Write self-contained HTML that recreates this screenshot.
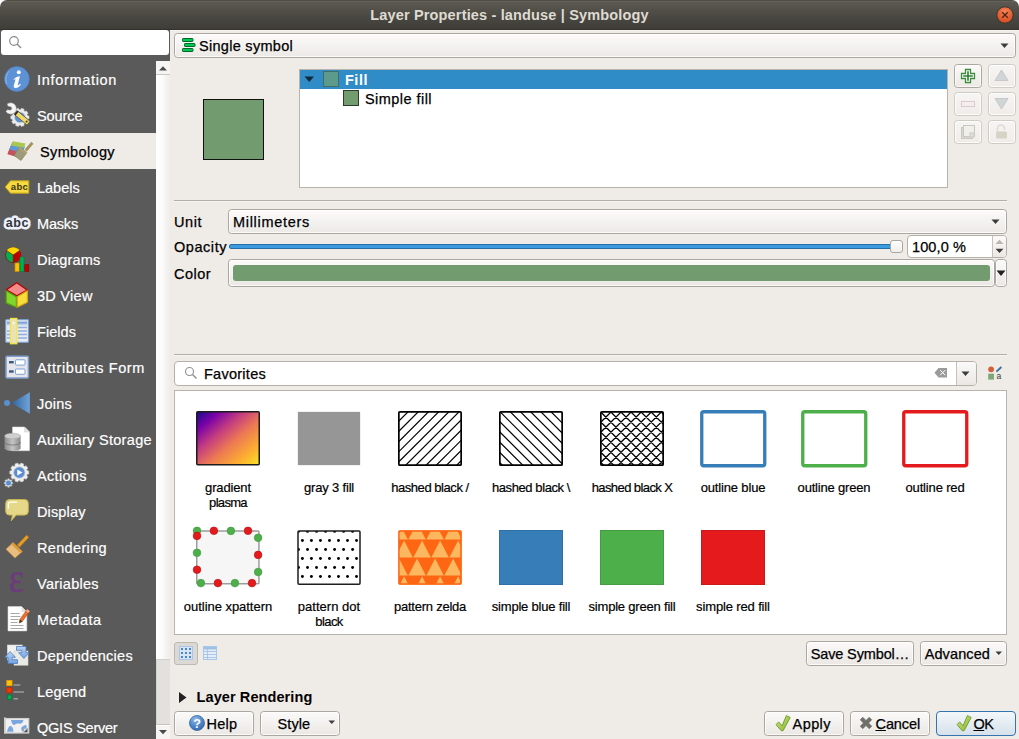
<!DOCTYPE html>
<html><head><meta charset="utf-8">
<style>
*{box-sizing:border-box;margin:0;padding:0}
html,body{width:1019px;height:739px;overflow:hidden;background:#efebe7;font-family:"Liberation Sans",sans-serif;font-size:15px;color:#1a1a1a}
.abs{position:absolute}
#title{left:0;top:0;width:1019px;height:30px;background:linear-gradient(#4f4d46 0,#4f4d46 1px,#65625a 1px,#65625a 2px,#5b5951 2px,#4a4842 55%,#3e3d38 29px,#33322e 29px,#33322e 30px);border-radius:7px 7px 0 0}
#title .t{left:0;width:1019px;top:7px;text-align:center;color:#dfdbd2;font-weight:bold;font-size:14.5px;line-height:17px;white-space:nowrap}
#side{left:0;top:55px;width:156px;height:684px;background:#5a5a5a}
#sidetop{left:0;top:30px;width:170px;height:31px;background:#5a5a5a}
#search{left:1px;top:30px;width:168px;height:25px;background:#fff;border-radius:3px}
.it{-webkit-text-stroke:.2px #fff;left:0;width:156px;height:36px;color:#fff;font-size:14.5px;line-height:36px;padding-left:37px;padding-top:1px}
.it.sel{background:#efebe7;color:#000;-webkit-text-stroke:.25px #000;padding-left:40px}
#sb{left:156px;top:61px;width:14px;height:678px;background:#fff}
.btn{border:1px solid #aba7a0;border-radius:3.5px;background:linear-gradient(#fbfaf9,#ebe8e4);box-shadow:inset 0 0 0 1px rgba(255,255,255,.75)}
.combo{border:1px solid #aba7a0;border-radius:3.5px;background:linear-gradient(#fcfbfa,#ece9e6);box-shadow:inset 0 0 0 1px rgba(255,255,255,.75)}
.lbl{font-size:14.5px;white-space:nowrap;margin-top:1px;color:#000;-webkit-text-stroke:.25px #000}
.btn.dis{border-color:#cfcbc5;background:linear-gradient(#f7f5f3,#efece8)}
.sym{width:64px;height:55px}
.sl{color:#000;-webkit-text-stroke:.2px #000;font-size:13px;text-align:center;width:120px;line-height:15px;white-space:nowrap}
</style></head><body>
<div class="abs" style="left:0;top:0;width:1019px;height:8px;background:#fff"></div>
<div id="title" class="abs"><div class="t abs"><span style="letter-spacing: 0.16px;">Layer Properties - landuse | Symbology</span></div>
<svg class="abs" style="left:996px;top:5.600px" width="18" height="18"><defs><radialGradient id="cg" cx=".5" cy=".3" r=".7"><stop offset="0" stop-color="#f58458"></stop><stop offset="1" stop-color="#d8491c"></stop></radialGradient></defs><circle cx="9" cy="9" r="8.2" fill="url(#cg)" stroke="#3a3832" stroke-width="1"></circle><path d="M6.200 6.200l5.600 5.600M11.800 6.200l-5.600 5.600" stroke="#4a2418" stroke-width="1.300"></path></svg></div>
<div class="abs" style="left:170px;top:30px;width:849px;height:1px;background:#f6f4f1"></div>
<div id="sidetop" class="abs"></div>
<div id="side" class="abs"></div>
<div id="search" class="abs"><svg class="abs" style="left:7px;top:5px" width="16" height="16"><circle cx="6" cy="6" r="4.3" fill="none" stroke="#8a8a8a" stroke-width="1.2"></circle><path d="M9 9l4 4" stroke="#8a8a8a" stroke-width="1.5"></path></svg></div>
<div id="sb" class="abs"></div>
<div class="abs" style="left:156px;top:61px;width:14px;height:14px;background:#f6f5f3;border-bottom:1px solid #cbc7c1"></div>
<svg class="abs" style="left:159px;top:66px" width="9" height="5"><path d="M0 4.500h8l-4-4.200z" fill="#4a4a4a"></path></svg>
<div class="abs" style="left:156px;top:75px;width:14px;height:585px;background:linear-gradient(to right,#fff,#fdfcfc 40%,#efedea);border-bottom:1px solid #d3d0cb"></div>
<div class="abs" style="left:156px;top:660px;width:14px;height:65px;background:#e3e1de;border-left:1px solid #d6d3cf;border-bottom:1px solid #c5c1bb"></div>
<div class="abs" style="left:156px;top:726px;width:14px;height:13px;background:#f6f5f3"></div>
<svg class="abs" style="left:159px;top:730px" width="9" height="5"><path d="M0 0h8l-4 4.200z" fill="#4a4a4a"></path></svg>
<div id="items">
<div class="it abs" style="top:61px"><span style="letter-spacing: 0.68px;">Information</span></div>
<div class="it abs" style="top:97px"><span style="letter-spacing: -0.09px;">Source</span></div>
<div class="it abs sel" style="top:133px"><span style="letter-spacing: 0.36px;">Symbology</span></div>
<div class="it abs" style="top:169px"><span style="letter-spacing: -0.01px;">Labels</span></div>
<div class="it abs" style="top:205px"><span style="letter-spacing: -0.18px;">Masks</span></div>
<div class="it abs" style="top:241px"><span style="letter-spacing: 0.16px;">Diagrams</span></div>
<div class="it abs" style="top:277px"><span style="letter-spacing: 0.27px;">3D View</span></div>
<div class="it abs" style="top:313px"><span style="letter-spacing: 0.05px;">Fields</span></div>
<div class="it abs" style="top:349px"><span style="letter-spacing: 0.59px;">Attributes Form</span></div>
<div class="it abs" style="top:385px"><span style="letter-spacing: 0.21px;">Joins</span></div>
<div class="it abs" style="top:421px"><span style="letter-spacing: 0.31px;">Auxiliary Storage</span></div>
<div class="it abs" style="top:457px"><span style="letter-spacing: 0.31px;">Actions</span></div>
<div class="it abs" style="top:493px"><span style="letter-spacing: 0.14px;">Display</span></div>
<div class="it abs" style="top:529px"><span style="letter-spacing: 0.34px;">Rendering</span></div>
<div class="it abs" style="top:565px"><span style="letter-spacing: 0.28px;">Variables</span></div>
<div class="it abs" style="top:601px"><span style="letter-spacing: 0.53px;">Metadata</span></div>
<div class="it abs" style="top:637px"><span style="letter-spacing: 0.27px;">Dependencies</span></div>
<div class="it abs" style="top:673px"><span style="letter-spacing: 0.15px;">Legend</span></div>
<div class="it abs" style="top:709px"><span style="letter-spacing: -0.23px;">QGIS Server</span></div>
</div>



<!-- ICONS --><svg class="abs" style="left:0;top:0;pointer-events:none" width="40" height="739"><defs><radialGradient id="ig" cx=".4" cy=".2" r=".9"><stop offset="0" stop-color="#8db6e8"></stop><stop offset=".55" stop-color="#5a90d2"></stop><stop offset="1" stop-color="#3e72b8"></stop></radialGradient><linearGradient id="jg" x1="0" x2="1"><stop offset="0" stop-color="#2f639c"></stop><stop offset="1" stop-color="#6fa3da"></stop></linearGradient><linearGradient id="dbg" x1="0" x2="1"><stop offset="0" stop-color="#8e8e8e"></stop><stop offset=".5" stop-color="#c4c4c4"></stop><stop offset="1" stop-color="#8a8a8a"></stop></linearGradient><linearGradient id="bag" x1="0" y1="0" x2="0" y2="1"><stop offset="0" stop-color="#b9d2f4"></stop><stop offset="1" stop-color="#74a2e2"></stop></linearGradient></defs><circle cx="16.9" cy="79" r="12.4" fill="#5d93d6" stroke="#4f84c8" stroke-width=".6"></circle><path d="M6 84a11.3 11.3 0 0 1 5-14.500a12.5 12.5 0 0 0-3.6 14.500z" fill="#fff" opacity=".25"></path><circle cx="18.8" cy="72.2" r="2" fill="#fff"></circle><path d="M13.2 80.300C14 78.3 16 76.6 19.9 76.200L17.7 85C17.6 85.6 18 85.6 18.6 85.100L20.2 83.800L20.8 84.700C19.5 86.5 17.7 87.9 15.6 87.900C13.9 87.9 13.4 86.9 13.8 85.400L15.6 79.300C15 79.4 14.2 79.8 13.2 80.300Z" fill="#fff"></path><path d="M28.99 115.98L28.99 118.82L27.50 119.14L27.07 120.46L28.09 121.59L26.42 123.90L25.03 123.28L23.90 124.10L24.06 125.60L21.35 126.48L20.60 125.17L19.20 125.17L18.45 126.48L15.74 125.60L15.90 124.10L14.77 123.28L13.38 123.90L11.71 121.59L12.73 120.46L12.30 119.14L10.81 118.82L10.81 115.98L12.30 115.66L12.73 114.34L11.71 113.21L13.38 110.90L14.77 111.52L15.90 110.70L15.74 109.20L18.45 108.32L19.20 109.63L20.60 109.63L21.35 108.32L24.06 109.20L23.90 110.70L25.03 111.52L26.42 110.90L28.09 113.21L27.07 114.34L27.50 115.66z" fill="#ececec" stroke="#cfcfcf" stroke-width="0.6" stroke-linejoin="round"></path><circle cx="19.9" cy="117.4" r="5.4" fill="#5b8fd4" stroke="#d8d8d8" stroke-width=".8"></circle><g transform="translate(10.8 108.5) rotate(39.5)"><rect x="2" y="-2.1" width="5.5" height="4.2" fill="#d9d9d9" stroke="#7a7a7a" stroke-width=".5"></rect><g transform="rotate(-30)"><path d="M-4.4 -3.700A5.7 5.7 0 1 1 -4.4 3.700L-3.2 1.700L-0.8 1.700A1.7 1.7 0 0 0 -0.8 -1.700L-3.2 -1.700Z" fill="#f4f4f4" stroke="#8a8a8a" stroke-width=".5" stroke-linejoin="round"></path></g><rect x="6.3" y="-2.4" width="16.8" height="4.8" rx="1" fill="#f1da6c" stroke="#57523a" stroke-width=".8"></rect><rect x="6.3" y="-2.4" width="1.8" height="4.8" fill="#2e2c24"></rect><circle cx="20.5" cy="0" r="1" fill="#3c3a2c"></circle></g><path d="M7.5 154l5-12 12 4-4 12z" fill="#c94a5a"></path><path d="M7.5 154l3.3-8 13.4 3.5-3.7 8.500z" fill="#c8505c"></path><path d="M9.3 149.500l2.4-5.7 13.3 3-2.7 6z" fill="#5a9bd8"></path><path d="M11 145.500l2-4.3 12.5 2.3-1.8 4.300z" fill="#a9c850"></path><path d="M25 149.500l6.3-7.3 1.8 1.5-6.2 7.400z" fill="#a8925a" stroke="#8c7846" stroke-width=".5"></path><path d="M19.5 147l7.5 5.5-6 8-7-5z" fill="#9c9a78" stroke="#7e7c5c" stroke-width=".6"></path><path d="M19.5 147l7.5 5.5-1.2 1.6-7.5-5.500z" fill="#b3a46c"></path><path d="M10.5 180.800h18.300v12.400h-18.300l-5.3-6.200z" fill="#f6da3e" stroke="#c2a21c" stroke-width="1" stroke-linejoin="round"></path><text x="19.5" y="190.3" text-anchor="middle" font-family="Liberation Sans" font-weight="bold" font-size="9.5" fill="#3a3420" letter-spacing=".3">abc</text><text x="17.3" y="227.3" text-anchor="middle" font-family="Liberation Sans" font-weight="bold" font-size="12.5" fill="#eef0fa" stroke="#eef0fa" stroke-width="5" stroke-linejoin="round" letter-spacing=".6">abc</text><text x="17.3" y="227.3" text-anchor="middle" font-family="Liberation Sans" font-weight="bold" font-size="12.5" fill="#33363c" letter-spacing=".6">abc</text><circle cx="13.2" cy="255" r="7.7" fill="#00b050" stroke="#7a1a10" stroke-width=".8"></circle><path d="M13.2 255l-6.4-4.300a7.7 7.7 0 0 1 12.8 0z" fill="#ffd700"></path><path d="M13.2 255l6.4-4.300a7.7 7.7 0 0 1-6.4 12z" fill="#c00000"></path><path d="M13.2 255v7.700M13.2 255l-6.4-4.300M13.2 255l6.4-4.3" stroke="#7a1a10" stroke-width=".7"></path><rect x="15" y="263" width="4.2" height="8.5" fill="#ffc000" stroke="#c98a00" stroke-width=".6"></rect><rect x="20" y="257" width="4" height="14.5" fill="#00b050" stroke="#007a36" stroke-width=".6"></rect><rect x="24.8" y="264.7" width="4" height="6.8" fill="#c00000" stroke="#8a0000" stroke-width=".6"></rect><path d="M16.8 282.800l10.4 7.1-10.4 5.9-10.4-6.100z" fill="#f48a8a" stroke="#b40000" stroke-width="1.2" stroke-linejoin="round"></path><path d="M6.2 290.800l10.2 6v10.400l-10.2-4.300z" fill="#80d62a" stroke="#55a010" stroke-width="1.2" stroke-linejoin="round"></path><path d="M27.4 290.800l-10.2 6v10.400l10.2-5z" fill="#f8dc3c" stroke="#d0a818" stroke-width="1.2" stroke-linejoin="round"></path><rect x="5.7" y="319.5" width="22.8" height="22.8" rx="1" fill="#e9ebf2" stroke="#7d9dce" stroke-width="1.2"></rect><rect x="6.5" y="320.3" width="21.2" height="5" fill="#bcd0ec"></rect><path d="M7 322.800h20" stroke="#7fa3d8" stroke-width="1.6"></path><path d="M18 327.500h9M18 331h9M18 334.500h9M18 338h9" stroke="#8fb0de" stroke-width="1.3"></path><path d="M7 331h3M7 334.500h3M7 338h3" stroke="#8fb0de" stroke-width="1.3"></path><rect x="10.5" y="318.5" width="6.3" height="25.2" fill="#eae3b6" stroke="#f4e640" stroke-width="1.3"></rect><circle cx="13.5" cy="323" r="1" fill="#fff"></circle><rect x="6" y="356.3" width="22.4" height="21.8" rx="1" fill="#e6e6ea" stroke="#7d9dce" stroke-width="1.5"></rect><rect x="15.5" y="359.8" width="9.5" height="5.3" rx=".8" fill="#fff" stroke="#7aa0d8" stroke-width="1"></rect><rect x="15.5" y="369" width="9.5" height="5.3" rx=".8" fill="#fff" stroke="#7aa0d8" stroke-width="1"></rect><rect x="9" y="361" width="4.7" height="2.4" fill="#3d5878"></rect><rect x="9" y="370.3" width="4.7" height="2.4" fill="#3d5878"></rect><circle cx="7" cy="403" r="3" fill="#5a8ed0"></circle><path d="M11.6 403l18.2-10.800v21.600z" fill="url(#jg)"></path><path d="M12.5 427h12l5 5v18.700h-17z" fill="#fff" stroke="#d8d8d8" stroke-width=".6"></path><path d="M24.5 427v5h5z" fill="#e4e4e4" stroke="#cfcfcf" stroke-width=".5"></path><path d="M4.6 436v12.300a8 2.8 0 0 0 16 0v-12.300z" fill="url(#dbg)"></path><ellipse cx="12.6" cy="436" rx="8" ry="2.8" fill="#cfcfcf" stroke="#a2a2a2" stroke-width=".5"></ellipse><path d="M4.6 442.200a8 2.8 0 0 0 16 0" fill="none" stroke="#6e6e6e" stroke-width=".8"></path><path d="M28.78 471.01L28.78 473.99L27.20 474.30L26.75 475.68L27.85 476.87L26.10 479.28L24.63 478.60L23.46 479.45L23.64 481.06L20.82 481.98L20.02 480.57L18.58 480.57L17.78 481.98L14.96 481.06L15.14 479.45L13.97 478.60L12.50 479.28L10.75 476.87L11.85 475.68L11.40 474.30L9.82 473.99L9.82 471.01L11.40 470.70L11.85 469.32L10.75 468.13L12.50 465.72L13.97 466.40L15.14 465.55L14.96 463.94L17.78 463.02L18.58 464.43L20.02 464.43L20.82 463.02L23.64 463.94L23.46 465.55L24.63 466.40L26.10 465.72L27.85 468.13L26.75 469.32L27.20 470.70z" fill="#efefef" stroke="#cdcdcd" stroke-width="0.6" stroke-linejoin="round"></path><circle cx="19.3" cy="472.5" r="5.7" fill="#5b8fd4" stroke="#d0d0d0" stroke-width=".8"></circle><path d="M17.3 469.500l5.2 3-5.2 3z" fill="#fff"></path><path d="M12.73 482.24L12.73 483.76L11.60 483.81L11.26 484.62L12.03 485.46L10.96 486.53L10.12 485.76L9.31 486.10L9.26 487.23L7.74 487.23L7.69 486.10L6.88 485.76L6.04 486.53L4.97 485.46L5.74 484.62L5.40 483.81L4.27 483.76L4.27 482.24L5.40 482.19L5.74 481.38L4.97 480.54L6.04 479.47L6.88 480.24L7.69 479.90L7.74 478.77L9.26 478.77L9.31 479.90L10.12 480.24L10.96 479.47L12.03 480.54L11.26 481.38L11.60 482.19z" fill="#e8e8e8" stroke="#bdbdbd" stroke-width="0.5" stroke-linejoin="round"></path><circle cx="8.5" cy="483" r="2.5" fill="#5b8fd4"></circle><path d="M9.5 499.500h15a3.8 3.8 0 0 1 3.8 3.800v8a3.8 3.8 0 0 1-3.8 3.800h-8.300l-5 5.7 1.3-5.700h-3a3.8 3.8 0 0 1-3.8-3.800v-8a3.8 3.8 0 0 1 3.8-3.800z" fill="#e5d989" stroke="#c5b350" stroke-width="1" stroke-linejoin="round"></path><path d="M8.3 508v-3.500a2.3 2.3 0 0 1 2.3-2.300h6" fill="none" stroke="#fff" stroke-width="1.3" stroke-linecap="round"></path><path d="M26.6 535.300l2.1 2-9.2 9.8-2.1-2z" fill="#e79f24" stroke="#c98414" stroke-width=".8" stroke-linejoin="round"></path><path d="M13 542.600l9.3 8.9-7.4 6.5-8.9-8.700z" fill="#e9bd80" stroke="#cf9440" stroke-width=".7" stroke-linejoin="round"></path><path d="M13 542.600l9.3 8.9-1.8 1.6-9.3-8.900z" fill="#dd9a38"></path><text x="16.3" y="591.8" text-anchor="middle" font-family="Liberation Serif" font-size="41" fill="#6d3b7c" stroke="#6d3b7c" stroke-width=".7" transform="translate(16.3 0) scale(.86 1) translate(-16.3 0)">ε</text><path d="M8 606.600h13.500l5.3 5.300v19h-18.800z" fill="#fff" stroke="#d9d9d9" stroke-width=".6"></path><path d="M21.5 606.600v5.300h5.300z" fill="#e2e2e2"></path><path d="M10.5 613.500h9M10.5 616.500h10M10.5 619.500h8M10.5 622.500h7M10.5 625.500h13M10.5 628.500h13" stroke="#a8a8a8" stroke-width="1"></path><path d="M27.2 609.200l2.5 2-7.4 10.3-3 1.6.5-3.500z" fill="#e8702a" stroke="#b85216" stroke-width=".6" stroke-linejoin="round"></path><path d="M19.3 623.100l.5-3.5 2.5 1.900z" fill="#3a3a3a"></path><path d="M27.2 609.200l2.5 2-1.2 1.6-2.5-1.900z" fill="#f0b8a0"></path><rect x="7.3" y="645" width="15" height="15" fill="#f2f2f0" stroke="#d4d4d0" stroke-width=".6"></rect><rect x="14" y="651" width="14" height="14.2" fill="#e9e9e6" stroke="#cfcfca" stroke-width=".6"></rect><path d="M16.5 646.500h9.500v6.200h3.200l-5.3 5.8-5.3-5.800h3.200v-2.400h-5.300z" fill="url(#bag)" stroke="#4d7cc2" stroke-width=".8" stroke-linejoin="round"></path><path d="M17.5 663.500h-9.500v-6.200h-3.200l5.3-5.8 5.3 5.800h-3.200v2.400h5.300z" fill="url(#bag)" stroke="#4d7cc2" stroke-width=".8" stroke-linejoin="round"></path><rect x="6.8" y="680.6" width="5.2" height="5" fill="#ffc400" stroke="#f0a000" stroke-width=".8"></rect><rect x="6.8" y="687.7" width="5.2" height="5" fill="#f03800" stroke="#c02800" stroke-width=".8"></rect><rect x="7.3" y="695" width="4.4" height="4.5" fill="#00b050" stroke="#007a36" stroke-width=".8"></rect><path d="M13.5 685h6.800M13.5 692h10.400M13.5 698.700h4.5" stroke="#9a9a9a" stroke-width="1.6"></path><rect x="5.3" y="718.6" width="23.4" height="14.4" fill="#f1f1f1" stroke="#cfcfcf" stroke-width="1.3"></rect><path d="M4.8 717.300v16.5" stroke="#e0e0e0" stroke-width="1.2"></path><path d="M11 720h12.500c-.5 2.5-2 4-4 3.600s-3.5 0-4.5 1-3 .4-4-4.600z" fill="#7ba7e0"></path><path d="M7 731.800c.5-3 1.5-5.5 3.3-5.800s3 2.5 3.2 5.800z" fill="#7ba7e0"></path><path d="M21.5 727.500c1.5-2 3.5-2.8 5-2.500v3l-3.5 3.500c-1.5-.5-2.3-2-1.5-4z" fill="#7ba7e0"></path><path d="M23.5 732.200l4-4v4z" fill="#4a4a4a"></path><path d="M23.5 732.200l.3-3.7 3.7-.3z" fill="#e4e4e4" stroke="#8a8a8a" stroke-width=".4"></path></svg><!-- /ICONS -->
<div id="main">
<!-- renderer combo -->
<div class="combo abs" style="left:174px;top:33px;width:842px;height:25px"></div>
<svg class="abs" style="left:181px;top:37px" width="16" height="16"><g fill="#00c853" stroke="#00692c" stroke-width="1"><rect x="1.5" y="1.5" width="10.500" height="3" rx=".6"></rect><rect x="3.500" y="6.500" width="10.500" height="3" rx=".6"></rect><rect x="1.500" y="11.500" width="10.500" height="3" rx=".6"></rect></g></svg>
<div class="abs lbl" style="left:199px;top:37px;line-height:17px"><span style="letter-spacing: 0.29px;">Single symbol</span></div>
<svg class="abs" style="left:1000px;top:43px" width="10" height="6"><path d="M0.5 0.5h8l-4 4.5z" fill="#3c3c3c"></path></svg>
<!-- preview -->
<div class="abs" style="left:203px;top:99px;width:61px;height:61px;background:#729b6f;border:1px solid #111"></div>
<!-- tree -->
<div class="abs" style="left:299px;top:69px;width:649px;height:119px;background:#fff;border:1px solid #b8b4ad"></div>
<div class="abs" style="left:300px;top:70px;width:647px;height:19px;background:#308cc6"></div>
<svg class="abs" style="left:304px;top:76px" width="11" height="7"><path d="M0.5 0.5h9.5l-4.75 5.5z" fill="#10293d"></path></svg>
<div class="abs" style="left:323px;top:71px;width:16px;height:16px;background:#5d9a8b;border:1px solid #416e66"></div>
<div class="abs lbl" style="left:345px;top:71px;line-height:17px;font-weight:bold;color:#fff;-webkit-text-stroke:0"><span style="letter-spacing: 0.51px;">Fill</span></div>
<div class="abs" style="left:343px;top:90px;width:16px;height:16px;background:#729b6f;border:1px solid #2d3a2c"></div>
<div class="abs lbl" style="left:365px;top:90px;line-height:17px"><span style="letter-spacing: 0.45px;">Simple fill</span></div>
<!-- side buttons -->
<div class="btn abs" style="left:954px;top:64px;width:28px;height:24px"></div>
<div class="btn abs dis" style="left:988px;top:64px;width:28px;height:24px"></div>
<div class="btn abs dis" style="left:954px;top:92px;width:28px;height:24px"></div>
<div class="btn abs dis" style="left:988px;top:92px;width:28px;height:24px"></div>
<div class="btn abs dis" style="left:954px;top:120px;width:28px;height:24px"></div>
<div class="btn abs dis" style="left:988px;top:120px;width:28px;height:24px"></div>
<svg class="abs" style="left:960px;top:68px" width="16" height="16"><path d="M5.5 1.5h5v4h4v5h-4v4h-5v-4h-4v-5h4z" fill="#fff" stroke="#3d8b3d" stroke-width="1.3"></path><path d="M7.2 3.2h1.6v4h4v1.6h-4v4h-1.6v-4h-4v-1.6h4z" fill="#2e7d32"></path></svg>
<svg class="abs" style="left:994px;top:69px" width="15" height="13"><path d="M7.5 1L14 11.5H1z" fill="#d2d5d6" stroke="#c6c9ca" stroke-width="1"></path></svg>
<svg class="abs" style="left:994px;top:97px" width="15" height="13"><path d="M7.5 12L14 1.5H1z" fill="#d2d5d6" stroke="#c6c9ca" stroke-width="1"></path></svg>
<svg class="abs" style="left:961px;top:101px" width="15" height="8"><rect x="0.5" y="0.5" width="13" height="5" fill="#f4eeee" stroke="#dcc9cb"></rect></svg>
<svg class="abs" style="left:960px;top:124px" width="16" height="16"><rect x="1.5" y="3.5" width="11" height="11" fill="#d9d7d2" stroke="#c9c7c1"></rect><rect x="3.5" y="1.5" width="11" height="11" fill="#f1efec" stroke="#c9c7c1"></rect><rect x="10" y="9" width="4" height="4" fill="#dfe3d8" stroke="#c9cdc0"></rect></svg>
<svg class="abs" style="left:994px;top:123px" width="15" height="17"><path d="M3.5 9V5.5a3.5 3.5 0 0 1 7 0V7" fill="none" stroke="#dddad4" stroke-width="1.6"></path><rect x="2" y="8.5" width="11" height="7" rx="1.5" fill="#d5d2c6"></rect></svg>
<!-- separator -->
<div class="abs" style="left:174px;top:200px;width:833px;height:1px;background:#b3afa8"></div><div class="abs" style="left:174px;top:201px;width:833px;height:1px;background:#f7f5f3"></div>
<div class="abs lbl" style="left:174px;top:213px;line-height:17px"><span style="letter-spacing: 0.55px;">Unit</span></div>
<div class="combo abs" style="left:228px;top:209px;width:779px;height:25px"></div>
<div class="abs lbl" style="left:233px;top:213px;line-height:17px"><span style="letter-spacing: 0.7px;">Millimeters</span></div>
<svg class="abs" style="left:991px;top:219px" width="10" height="6"><path d="M0.5 0.5h8l-4 4.5z" fill="#3c3c3c"></path></svg>
<div class="abs lbl" style="left:174px;top:238px;line-height:17px"><span style="letter-spacing: 0.55px;">Opacity</span></div>
<div class="abs" style="left:229px;top:244px;width:668px;height:5px;background:#3b9be0;border:1px solid #2a6ea6;border-radius:2px"></div>
<div class="abs" style="left:890px;top:240px;width:13px;height:13px;background:linear-gradient(#fff,#f0eeeb);border:1px solid #aaa6a0;border-radius:3px"></div>
<div class="abs" style="left:907px;top:235px;width:100px;height:23px;background:#fff;border:1px solid #b5b0a8;border-radius:4px"></div>
<div class="abs" style="left:992px;top:236px;width:14px;height:21px;background:linear-gradient(#fbfaf9,#ebe8e4);border-left:1px solid #c5c1ba;border-radius:0 3px 3px 0"></div>
<svg class="abs" style="left:995px;top:239px" width="9" height="16"><path d="M0.5 5h8l-4-4.200z" fill="#b9b6b0"></path><path d="M0.5 9.800h8l-4 4.200z" fill="#3c3c3c"></path></svg>
<div class="abs lbl" style="left:912px;top:238px;line-height:17px"><span style="letter-spacing: 0.11px;">100,0 %</span></div>
<div class="abs lbl" style="left:174px;top:265px;line-height:17px"><span style="letter-spacing: 0.47px;">Color</span></div>
<div class="btn abs" style="left:228px;top:259px;width:767px;height:28px"></div>
<div class="abs" style="left:233px;top:265px;width:757px;height:16px;background:#729b6f;border-radius:3px"></div>
<div class="btn abs" style="left:995px;top:259px;width:12px;height:28px"></div>
<svg class="abs" style="left:996px;top:270px" width="10" height="7"><path d="M0.5 0.5h9l-4.5 5.5z" fill="#222"></path></svg>
<div class="abs" style="left:174px;top:354px;width:833px;height:1px;background:#b3afa8"></div><div class="abs" style="left:174px;top:355px;width:833px;height:1px;background:#f7f5f3"></div>
<!-- favorites -->
<div class="abs" style="left:174px;top:361px;width:803px;height:25px;background:#fff;border:1px solid #b5b0a8;border-radius:4px"></div>
<div class="abs" style="left:956px;top:362px;width:20px;height:23px;background:linear-gradient(#fbfaf9,#ebe8e4);border-left:1px solid #c5c1ba;border-radius:0 3px 3px 0"></div>
<svg class="abs" style="left:184px;top:366px" width="14" height="14"><circle cx="5.5" cy="5.5" r="4" fill="none" stroke="#909090" stroke-width="1.1"></circle><path d="M8.5 8.5l4 4" stroke="#909090" stroke-width="1.4"></path></svg>
<div class="abs lbl" style="left:204px;top:365px;line-height:17px"><span style="letter-spacing: 0.26px;">Favorites</span></div>
<svg class="abs" style="left:934px;top:367px" width="14" height="12"><path d="M4.5 1h8.5v9.5h-8.5l-4-4.75z" fill="#9b9b9b"></path><path d="M6.200 3.200l5 5M11.200 3.200l-5 5" stroke="#fff" stroke-width="1"></path></svg>
<svg class="abs" style="left:961px;top:371px" width="10" height="6"><path d="M0.5 0.5h8l-4 4.5z" fill="#3c3c3c"></path></svg>
<svg class="abs" style="left:986px;top:365px" width="17" height="17"><circle cx="5.100" cy="4.300" r="2.900" fill="#d2603a"></circle><rect x="2.200" y="8.700" width="5.800" height="5.900" fill="#7fa878"></rect><path d="M10.400 6.600l5-4.600" stroke="#3a6ea0" stroke-width="1.900"></path><text x="10.600" y="13.700" font-size="8.500" font-family="Liberation Sans" fill="#3a3a3a">a</text></svg>
<!-- list -->
<div class="abs" style="left:174px;top:390px;width:833px;height:245px;background:#fff;border:1px solid #b8b4ad"></div>
<!-- SYMS -->
<svg class="abs" style="left:196px;top:411px" width="64" height="55"><defs><linearGradient id="pl" x1="0" y1="0" x2="1" y2="1"><stop offset="0" stop-color="#160b8a"></stop><stop offset=".18" stop-color="#7a02a8"></stop><stop offset=".38" stop-color="#c43e7f"></stop><stop offset=".58" stop-color="#ed7953"></stop><stop offset=".82" stop-color="#fdb030"></stop><stop offset="1" stop-color="#f6e626"></stop></linearGradient></defs><rect x=".75" y=".75" width="62.5" height="53" rx="1" fill="url(#pl)" stroke="#1c1c1c" stroke-width="1.5"></rect></svg>
<div class="abs" style="left:298px;top:412px;width:62px;height:53px;background:#969696;box-shadow:0 0 1px #aaa"></div>
<svg class="abs" style="left:398px;top:411px" width="64" height="55"><defs><clipPath id="c398"><rect x="1" y="1" width="62" height="53"></rect></clipPath></defs><rect x="0" y="0" width="64" height="55" fill="#fff"></rect><path d="M-9.50 0L-66.50 57M0.70 0L-56.30 57M10.90 0L-46.10 57M21.10 0L-35.90 57M31.30 0L-25.70 57M41.50 0L-15.50 57M51.70 0L-5.30 57M61.90 0L4.90 57M72.10 0L15.10 57M82.30 0L25.30 57M92.50 0L35.50 57M102.70 0L45.70 57M112.90 0L55.90 57M123.10 0L66.10 57" stroke="#000" stroke-width="1.2" fill="none" clip-path="url(#c398)"></path><rect x=".85" y=".85" width="62.3" height="53.3" rx="1" fill="none" stroke="#000" stroke-width="1.7"></rect></svg>
<svg class="abs" style="left:499px;top:411px" width="64" height="55"><defs><clipPath id="c499"><rect x="1" y="1" width="62" height="53"></rect></clipPath></defs><rect x="0" y="0" width="64" height="55" fill="#fff"></rect><path d="M-122.15 0L-65.15 57M-111.95 0L-54.95 57M-101.75 0L-44.75 57M-91.55 0L-34.55 57M-81.35 0L-24.35 57M-71.15 0L-14.15 57M-60.95 0L-3.95 57M-50.75 0L6.25 57M-40.55 0L16.45 57M-30.35 0L26.65 57M-20.15 0L36.85 57M-9.95 0L47.05 57M0.25 0L57.25 57M10.45 0L67.45 57M20.65 0L77.65 57M30.85 0L87.85 57M41.05 0L98.05 57M51.25 0L108.25 57M61.45 0L118.45 57M71.65 0L128.65 57" stroke="#000" stroke-width="1.2" fill="none" clip-path="url(#c499)"></path><rect x=".85" y=".85" width="62.3" height="53.3" rx="1" fill="none" stroke="#000" stroke-width="1.7"></rect></svg>
<svg class="abs" style="left:600px;top:411px" width="64" height="55"><defs><clipPath id="c600"><rect x="1" y="1" width="62" height="53"></rect></clipPath></defs><rect x="0" y="0" width="64" height="55" fill="#fff"></rect><path d="M-8.18 0L-65.18 57M1.89 0L-55.11 57M11.96 0L-45.04 57M22.03 0L-34.97 57M32.10 0L-24.90 57M42.17 0L-14.83 57M52.24 0L-4.76 57M62.31 0L5.31 57M72.38 0L15.38 57M82.45 0L25.45 57M92.52 0L35.52 57M102.59 0L45.59 57M112.66 0L55.66 57M122.73 0L65.73 57M-121.06 0L-64.06 57M-110.99 0L-53.99 57M-100.92 0L-43.92 57M-90.85 0L-33.85 57M-80.78 0L-23.78 57M-70.71 0L-13.71 57M-60.64 0L-3.64 57M-50.57 0L6.43 57M-40.50 0L16.50 57M-30.43 0L26.57 57M-20.36 0L36.64 57M-10.29 0L46.71 57M-0.22 0L56.78 57M9.85 0L66.85 57M19.92 0L76.92 57M29.99 0L86.99 57M40.06 0L97.06 57M50.13 0L107.13 57M60.20 0L117.20 57M70.27 0L127.27 57" stroke="#000" stroke-width="1.3" fill="none" clip-path="url(#c600)"></path><rect x=".85" y=".85" width="62.3" height="53.3" rx="1" fill="none" stroke="#000" stroke-width="1.7"></rect></svg>
<svg class="abs" style="left:700px;top:410px" width="67" height="58"><rect x="1.75" y="1.75" width="63" height="54" rx="2" fill="#fff" stroke="#377eb8" stroke-width="3.3"></rect></svg>
<svg class="abs" style="left:801px;top:410px" width="67" height="58"><rect x="1.75" y="1.75" width="63" height="54" rx="2" fill="#fff" stroke="#4daf4a" stroke-width="3.3"></rect></svg>
<svg class="abs" style="left:902px;top:410px" width="67" height="58"><rect x="1.75" y="1.75" width="63" height="54" rx="2" fill="#fff" stroke="#e41a1c" stroke-width="3.3"></rect></svg>
<div class="abs sl" style="left:168px;top:480px"><span style="letter-spacing: -0.15px;">gradient</span></div>
<div class="abs sl" style="left:168px;top:495px"><span style="letter-spacing: -0.69px;">plasma</span></div>
<div class="abs sl" style="left:269px;top:480px"><span style="letter-spacing: -0.17px;">gray 3 fill</span></div>
<div class="abs sl" style="left:370px;top:480px"><span style="letter-spacing: -0.45px;">hashed black /</span></div>
<div class="abs sl" style="left:471px;top:480px"><span style="letter-spacing: -0.41px;">hashed black \</span></div>
<div class="abs sl" style="left:572px;top:480px"><span style="letter-spacing: -0.59px;">hashed black X</span></div>
<div class="abs sl" style="left:673px;top:480px"><span style="letter-spacing: -0.15px;">outline blue</span></div>
<div class="abs sl" style="left:774px;top:480px"><span style="letter-spacing: -0.18px;">outline green</span></div>
<div class="abs sl" style="left:875px;top:480px"><span style="letter-spacing: -0.16px;">outline red</span></div>
<svg class="abs" style="left:190px;top:524px" width="76" height="68"><rect x="6.75" y="7" width="62.2" height="52.8" rx="1" fill="#f6f6f6" stroke="#9d9d9d" stroke-width="1.5"></rect><circle cx="7.0" cy="6.8" r="3.8" fill="#4daf4a" stroke="#3f9c3d" stroke-width=".7"></circle><circle cx="23.9" cy="6.8" r="3.8" fill="#e41a1c" stroke="#b81419" stroke-width=".7"></circle><circle cx="40.9" cy="6.9" r="3.8" fill="#4daf4a" stroke="#3f9c3d" stroke-width=".7"></circle><circle cx="58.0" cy="6.8" r="3.8" fill="#e41a1c" stroke="#b81419" stroke-width=".7"></circle><circle cx="68.1" cy="13.8" r="3.8" fill="#4daf4a" stroke="#3f9c3d" stroke-width=".7"></circle><circle cx="68.1" cy="30.9" r="3.8" fill="#e41a1c" stroke="#b81419" stroke-width=".7"></circle><circle cx="68.1" cy="48.0" r="3.8" fill="#4daf4a" stroke="#3f9c3d" stroke-width=".7"></circle><circle cx="62.0" cy="59.1" r="3.8" fill="#e41a1c" stroke="#b81419" stroke-width=".7"></circle><circle cx="44.9" cy="59.1" r="3.8" fill="#4daf4a" stroke="#3f9c3d" stroke-width=".7"></circle><circle cx="27.9" cy="59.1" r="3.8" fill="#e41a1c" stroke="#b81419" stroke-width=".7"></circle><circle cx="10.9" cy="59.1" r="3.8" fill="#4daf4a" stroke="#3f9c3d" stroke-width=".7"></circle><circle cx="7.0" cy="45.7" r="3.8" fill="#e41a1c" stroke="#b81419" stroke-width=".7"></circle><circle cx="7.0" cy="28.8" r="3.8" fill="#4daf4a" stroke="#3f9c3d" stroke-width=".7"></circle><circle cx="7.0" cy="11.9" r="3.8" fill="#e41a1c" stroke="#b81419" stroke-width=".7"></circle></svg>
<svg class="abs" style="left:297px;top:530px" width="64" height="56"><defs><clipPath id="cd"><rect x="1" y="1" width="62" height="53"></rect></clipPath></defs><rect width="64" height="55" fill="#fff"></rect><g clip-path="url(#cd)" fill="#000"><circle cx="-7.52" cy="1.40" r="1.45"></circle><circle cx="1.50" cy="1.40" r="1.45"></circle><circle cx="10.52" cy="1.40" r="1.45"></circle><circle cx="19.54" cy="1.40" r="1.45"></circle><circle cx="28.56" cy="1.40" r="1.45"></circle><circle cx="37.58" cy="1.40" r="1.45"></circle><circle cx="46.60" cy="1.40" r="1.45"></circle><circle cx="55.62" cy="1.40" r="1.45"></circle><circle cx="64.64" cy="1.40" r="1.45"></circle><circle cx="-3.62" cy="10.43" r="1.45"></circle><circle cx="5.40" cy="10.43" r="1.45"></circle><circle cx="14.42" cy="10.43" r="1.45"></circle><circle cx="23.44" cy="10.43" r="1.45"></circle><circle cx="32.46" cy="10.43" r="1.45"></circle><circle cx="41.48" cy="10.43" r="1.45"></circle><circle cx="50.50" cy="10.43" r="1.45"></circle><circle cx="59.52" cy="10.43" r="1.45"></circle><circle cx="68.54" cy="10.43" r="1.45"></circle><circle cx="-7.52" cy="19.46" r="1.45"></circle><circle cx="1.50" cy="19.46" r="1.45"></circle><circle cx="10.52" cy="19.46" r="1.45"></circle><circle cx="19.54" cy="19.46" r="1.45"></circle><circle cx="28.56" cy="19.46" r="1.45"></circle><circle cx="37.58" cy="19.46" r="1.45"></circle><circle cx="46.60" cy="19.46" r="1.45"></circle><circle cx="55.62" cy="19.46" r="1.45"></circle><circle cx="64.64" cy="19.46" r="1.45"></circle><circle cx="-3.62" cy="28.49" r="1.45"></circle><circle cx="5.40" cy="28.49" r="1.45"></circle><circle cx="14.42" cy="28.49" r="1.45"></circle><circle cx="23.44" cy="28.49" r="1.45"></circle><circle cx="32.46" cy="28.49" r="1.45"></circle><circle cx="41.48" cy="28.49" r="1.45"></circle><circle cx="50.50" cy="28.49" r="1.45"></circle><circle cx="59.52" cy="28.49" r="1.45"></circle><circle cx="68.54" cy="28.49" r="1.45"></circle><circle cx="-7.52" cy="37.52" r="1.45"></circle><circle cx="1.50" cy="37.52" r="1.45"></circle><circle cx="10.52" cy="37.52" r="1.45"></circle><circle cx="19.54" cy="37.52" r="1.45"></circle><circle cx="28.56" cy="37.52" r="1.45"></circle><circle cx="37.58" cy="37.52" r="1.45"></circle><circle cx="46.60" cy="37.52" r="1.45"></circle><circle cx="55.62" cy="37.52" r="1.45"></circle><circle cx="64.64" cy="37.52" r="1.45"></circle><circle cx="-3.62" cy="46.55" r="1.45"></circle><circle cx="5.40" cy="46.55" r="1.45"></circle><circle cx="14.42" cy="46.55" r="1.45"></circle><circle cx="23.44" cy="46.55" r="1.45"></circle><circle cx="32.46" cy="46.55" r="1.45"></circle><circle cx="41.48" cy="46.55" r="1.45"></circle><circle cx="50.50" cy="46.55" r="1.45"></circle><circle cx="59.52" cy="46.55" r="1.45"></circle><circle cx="68.54" cy="46.55" r="1.45"></circle><circle cx="-7.52" cy="55.58" r="1.45"></circle><circle cx="1.50" cy="55.58" r="1.45"></circle><circle cx="10.52" cy="55.58" r="1.45"></circle><circle cx="19.54" cy="55.58" r="1.45"></circle><circle cx="28.56" cy="55.58" r="1.45"></circle><circle cx="37.58" cy="55.58" r="1.45"></circle><circle cx="46.60" cy="55.58" r="1.45"></circle><circle cx="55.62" cy="55.58" r="1.45"></circle><circle cx="64.64" cy="55.58" r="1.45"></circle></g><rect x="1" y="1" width="62" height="53.2" rx="1" fill="none" stroke="#1e1e1e" stroke-width="1.5"></rect></svg>
<svg class="abs" style="left:398px;top:530px" width="64" height="55"><defs><clipPath id="cz"><rect x="1.6" y="1.7" width="60.6" height="51.5" rx="1.5"></rect></clipPath></defs><rect x=".5" y=".5" width="63" height="54" rx="1.5" fill="#ff6614" stroke="#ff7a2e" stroke-width="1"></rect><g clip-path="url(#cz)" fill="#fdb75e"><path d="M-11.9 10.5l8.75 17h-17.5z"></path><path d="M-11.9 46.3l8.75 17h-17.5z"></path><path d="M6.1 10.5l8.75 17h-17.5z"></path><path d="M6.1 46.3l8.75 17h-17.5z"></path><path d="M24.1 10.5l8.75 17h-17.5z"></path><path d="M24.1 46.3l8.75 17h-17.5z"></path><path d="M42.1 10.5l8.75 17h-17.5z"></path><path d="M42.1 46.3l8.75 17h-17.5z"></path><path d="M60.1 10.5l8.75 17h-17.5z"></path><path d="M60.1 46.3l8.75 17h-17.5z"></path><path d="M78.1 10.5l8.75 17h-17.5z"></path><path d="M78.1 46.3l8.75 17h-17.5z"></path><path d="M-16.9 28.5l8.75 17h-17.5z"></path><path d="M-16.9 -7.5l8.75 17h-17.5z"></path><path d="M1.1 28.5l8.75 17h-17.5z"></path><path d="M1.1 -7.5l8.75 17h-17.5z"></path><path d="M19.1 28.5l8.75 17h-17.5z"></path><path d="M19.1 -7.5l8.75 17h-17.5z"></path><path d="M37.1 28.5l8.75 17h-17.5z"></path><path d="M37.1 -7.5l8.75 17h-17.5z"></path><path d="M55.1 28.5l8.75 17h-17.5z"></path><path d="M55.1 -7.5l8.75 17h-17.5z"></path><path d="M73.1 28.5l8.75 17h-17.5z"></path><path d="M73.1 -7.5l8.75 17h-17.5z"></path></g></svg>
<div class="abs" style="left:499px;top:530px;width:64px;height:55px;background:#377eb8;border:1px solid #3070a8"></div>
<div class="abs" style="left:600px;top:530px;width:64px;height:55px;background:#4daf4a;border:1px solid #459c42"></div>
<div class="abs" style="left:701px;top:530px;width:64px;height:55px;background:#e41a1c;border:1px solid #c8191b"></div>
<div class="abs sl" style="left:168px;top:599px"><span style="letter-spacing: -0.04px;">outline xpattern</span></div>
<div class="abs sl" style="left:269px;top:599px"><span style="letter-spacing: 0.02px;">pattern dot</span></div>
<div class="abs sl" style="left:269px;top:614px"><span style="letter-spacing: -0.59px;">black</span></div>
<div class="abs sl" style="left:370px;top:599px"><span style="letter-spacing: -0.23px;">pattern zelda</span></div>
<div class="abs sl" style="left:471px;top:599px"><span style="letter-spacing: -0.2px;">simple blue fill</span></div>
<div class="abs sl" style="left:572px;top:599px"><span style="letter-spacing: -0.2px;">simple green fill</span></div>
<div class="abs sl" style="left:673px;top:599px"><span style="letter-spacing: -0.14px;">simple red fill</span></div>
<!-- /SYMS -->
<!-- BOTTOM -->
<div class="abs" style="left:174px;top:642px;width:24px;height:23px;background:#dcd9d4;border:1px solid #bdb9b2;border-radius:3px"></div>
<svg class="abs" style="left:179px;top:646px" width="14" height="14"><rect x=".5" y=".5" width="13" height="13" fill="#d7e6f6" stroke="#a9c6e6"></rect><g fill="#4a86c8"><rect x="2" y="2" width="2" height="2"></rect><rect x="6" y="2" width="2" height="2"></rect><rect x="10" y="2" width="2" height="2"></rect><rect x="2" y="6" width="2" height="2"></rect><rect x="6" y="6" width="2" height="2"></rect><rect x="10" y="6" width="2" height="2"></rect><rect x="2" y="10" width="2" height="2"></rect><rect x="6" y="10" width="2" height="2"></rect><rect x="10" y="10" width="2" height="2"></rect></g></svg>
<svg class="abs" style="left:203px;top:646px" width="15" height="15"><rect x=".5" y=".5" width="13" height="13" fill="#e4eef9" stroke="#a9c6e6"></rect><rect x="1" y="1" width="12" height="2.500" fill="#9fc1e6"></rect><g stroke="#a9c6e6" stroke-width="1"><path d="M1 5.500h12M1 8.500h12M1 11.500h12M4.500 3v10.500"></path></g></svg>
<div class="btn abs" style="left:806px;top:641px;width:108px;height:25px"></div>
<div class="abs lbl" style="left:810.700px;top:645px;line-height:17px"><span style="letter-spacing: -0.13px;">Save Symbol…</span></div>
<div class="btn abs" style="left:920px;top:641px;width:87px;height:25px"></div>
<div class="abs lbl" style="left:924.700px;top:645px;line-height:17px"><span style="letter-spacing: 0.1px;">Advanced</span></div>
<svg class="abs" style="left:995px;top:651px" width="8" height="5"><path d="M0.500 0.500h6.500l-3.250 3.500z" fill="#3c3c3c"></path></svg>
<svg class="abs" style="left:178px;top:691px" width="10" height="13"><path d="M1 1l7.500 5.500-7.500 5.500z" fill="#222"></path></svg>
<div class="abs lbl" style="left:196.600px;top:688px;line-height:17px;font-weight:bold;color:#000;-webkit-text-stroke:0"><span style="letter-spacing: 0.09px;">Layer Rendering</span></div>
<div class="btn abs" style="left:174px;top:711px;width:80px;height:25px"></div>
<svg class="abs" style="left:189px;top:715px" width="17" height="17"><defs><radialGradient id="hg" cx=".4" cy=".25" r=".85"><stop offset="0" stop-color="#8fb8e6"></stop><stop offset=".6" stop-color="#4a82c4"></stop><stop offset="1" stop-color="#2f62a4"></stop></radialGradient></defs><circle cx="8" cy="8" r="7.500" fill="url(#hg)" stroke="#3466a5" stroke-width=".8"></circle><text x="8" y="12.500" text-anchor="middle" font-family="Liberation Sans" font-weight="bold" font-size="12.500" fill="#fff">?</text></svg>
<div class="abs lbl" style="left:206.500px;top:715px;line-height:17px"><span style="letter-spacing: 0.22px;">Help</span></div>
<div class="btn abs" style="left:260px;top:711px;width:80px;height:25px"></div>
<div class="abs lbl" style="left:277.500px;top:715px;line-height:17px"><span style="letter-spacing: 0.09px;">Style</span></div>
<svg class="abs" style="left:328px;top:720px" width="8" height="5"><path d="M0.500 0.500h6.500l-3.250 3.500z" fill="#3c3c3c"></path></svg>
<div class="btn abs" style="left:764px;top:711px;width:80px;height:25px"></div>
<svg class="abs" style="left:775px;top:714px" width="17" height="19"><defs><linearGradient id="ck775" x1="0" y1="0" x2="1" y2="1"><stop offset="0" stop-color="#cfe58c"></stop><stop offset="1" stop-color="#86b52b"></stop></linearGradient></defs><path d="M1 10.600l2.700-2.600 3.400 3.800 4.300-10.200 3.800 1.900-7.200 13.300-1.900-.2z" fill="url(#ck775)" stroke="#6c9a22" stroke-width=".9" stroke-linejoin="round"></path></svg>
<div class="abs lbl" style="left:792.600px;top:715px;line-height:17px"><span style="letter-spacing: 0.4px;">Apply</span></div>
<div class="btn abs" style="left:850px;top:711px;width:80px;height:25px"></div>
<svg class="abs" style="left:859px;top:716px" width="15" height="15"><path d="M1.200 3.800l2.600-2.600 3.200 3.200 3.200-3.200 2.600 2.600-3.200 3.200 3.200 3.200-2.600 2.600-3.200-3.200-3.200 3.200-2.600-2.600 3.200-3.200z" fill="#6f6f6b" stroke="#5c5c57" stroke-width=".5"></path></svg>
<div class="abs lbl" style="left:875.500px;top:715px;line-height:17px"><span style="letter-spacing: -0.11px;"><u>C</u>ancel</span></div>
<div class="abs" style="left:936px;top:711px;width:80px;height:25px;border:1.5px solid #3574ae;border-radius:4px;background:linear-gradient(#f3f7fa,#d6e1eb)"></div>
<svg class="abs" style="left:956px;top:714px" width="17" height="19"><defs><linearGradient id="ck956" x1="0" y1="0" x2="1" y2="1"><stop offset="0" stop-color="#cfe58c"></stop><stop offset="1" stop-color="#86b52b"></stop></linearGradient></defs><path d="M1 10.600l2.700-2.600 3.400 3.800 4.300-10.200 3.800 1.900-7.200 13.300-1.900-.2z" fill="url(#ck956)" stroke="#6c9a22" stroke-width=".9" stroke-linejoin="round"></path></svg>
<div class="abs lbl" style="left:973.400px;top:715px;line-height:17px"><span style="letter-spacing: -0.48px;"><u>O</u>K</span></div>
<!-- /BOTTOM -->
</div>

</body></html>
